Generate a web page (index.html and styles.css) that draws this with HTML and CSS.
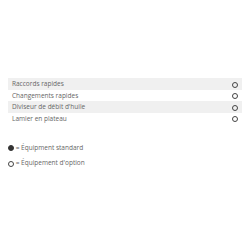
FILE: index.html
```html
<!DOCTYPE html>
<html lang="fr">

<head>
    <meta charset="UTF-8">
    <meta name="viewport" content="width=device-width, initial-scale=1.0">
    <title>Équipements</title>
    <link rel="stylesheet" href="styles.css">
</head>

<body>
    <div class="equipment-container">
        <table class="equipment-table">
            <tr>
                <td>Raccords rapides</td>
                <td class="mark"><span class="dot dot-open"></span></td>
            </tr>
            <tr>
                <td>Changements rapides</td>
                <td class="mark"><span class="dot dot-open"></span></td>
            </tr>
            <tr>
                <td>Diviseur de débit d'huile</td>
                <td class="mark"><span class="dot dot-open"></span></td>
            </tr>
            <tr>
                <td>Lamier en plateau</td>
                <td class="mark"><span class="dot dot-open"></span></td>
            </tr>
        </table>

        <div class="legend">
            <p class="legend-item"><span class="dot dot-full"></span> = Équipment standard</p>
            <p class="legend-item"><span class="dot dot-open"></span> = Équipement d'option</p>
        </div>
    </div>
</body>

</html>
```

FILE: styles.css
```css
body {
    margin: 0;
    padding: 8px;
    font-family: "Open Sans", sans-serif;
    background-color: #fff;
    color: #666;
}

.equipment-container {
    padding-top: 70px;
}

.equipment-table {
    width: 100%;
    border-collapse: collapse;
    font-size: 6.5px;
}

.equipment-table td {
    height: 11.5px;
    padding: 0 4px;
    vertical-align: middle;
}

.equipment-table tr:nth-child(odd) {
    background-color: #f0f0f0;
}

.mark {
    text-align: right;
    width: 10px;
}

.dot {
    display: inline-block;
    width: 4px;
    height: 4px;
    border-radius: 50%;
    border: 1px solid #444;
    vertical-align: middle;
}

.dot-full {
    background-color: #333;
    border-color: #333;
}

.legend {
    margin-top: 20px;
    font-size: 6.5px;
}

.legend-item {
    margin: 0 0 8px 0;
    line-height: 7px;
}
```
